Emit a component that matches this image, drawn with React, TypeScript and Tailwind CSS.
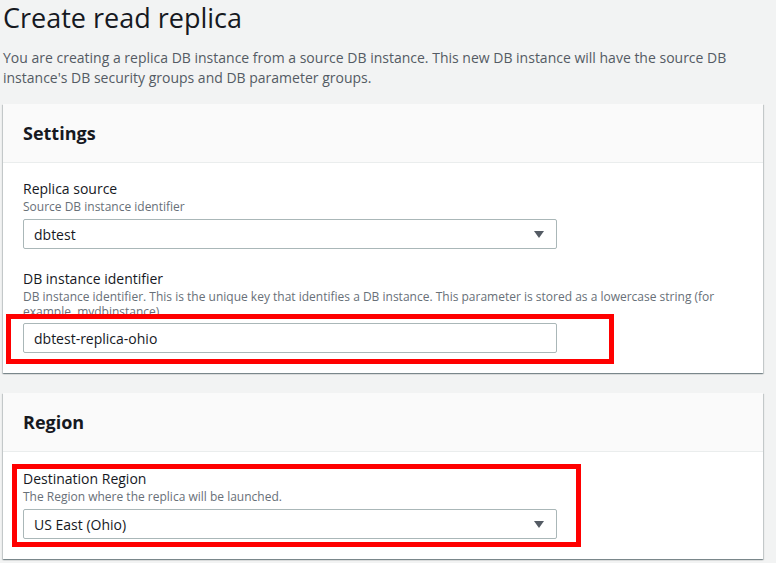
import React from "react";

const font = { fontFamily: '"Open Sans", "Noto Sans", sans-serif' };

function Caret() {
  return (
    <svg width="10" height="7" viewBox="0 0 10 7" className="shrink-0">
      <path d="M0 0 H10 L5 7 Z" fill="#545b64" />
    </svg>
  );
}

function Field({
  label,
  description,
  gap = "mt-[5px]",
  children,
}: {
  label: string;
  description: string;
  gap?: string;
  children: React.ReactNode;
}) {
  return (
    <div className="flex flex-col">
      <div className="text-[14px] leading-[20px] text-[#16191f]">{label}</div>
      <div className="text-[12px] leading-[15px] text-[#687078]">{description}</div>
      <div className={gap}>{children}</div>
    </div>
  );
}

function SelectBox({ value }: { value: string }) {
  return (
    <div className="flex h-[30px] w-[534px] items-center justify-between rounded-[2px] border border-[#aab7b8] bg-white pl-[10px] pr-[12px] text-[14px] text-[#16191f]">
      <span>{value}</span>
      <Caret />
    </div>
  );
}

function InputBox({ value }: { value: string }) {
  return (
    <div className="flex h-[30px] w-[534px] items-center rounded-[2px] border border-[#aab7b8] bg-white pl-[10px] text-[14px] text-[#16191f]">
      {value}
    </div>
  );
}

function Panel({ title, children }: { title: string; children: React.ReactNode }) {
  return (
    <section className="w-[760px] bg-white shadow-[0_1px_1px_0_rgba(0,28,36,0.3),1px_1px_1px_0_rgba(0,28,36,0.15),-1px_1px_1px_0_rgba(0,28,36,0.15)]">
      <div className="flex h-[59px] items-center border-b border-[#eaeded] bg-[#fafafa] px-[20px]">
        <h2 className="text-[18px] font-bold leading-[24px] text-[#16191f]">{title}</h2>
      </div>
      <div className="px-[20px] pb-[20px] pt-[16px]">{children}</div>
    </section>
  );
}

export default function App() {
  return (
    <div className="min-h-[563px] bg-[#f2f3f3] pl-[3px]" style={font}>
      <h1 className="text-[27px] font-normal leading-[36px] text-[#16191f]">Create read replica</h1>
      <p className="mt-[12px] w-[760px] text-[14px] leading-[20px] text-[#545b64]">
        You are creating a replica DB instance from a source DB instance. This new DB instance will have the
        source DB instance's DB security groups and DB parameter groups.
      </p>

      <div className="mt-[16px] flex flex-col gap-[20px]">
        <Panel title="Settings">
          <Field label="Replica source" description="Source DB instance identifier">
            <SelectBox value="dbtest" />
          </Field>
          <div className="mt-[20px]">
            <Field
              label="DB instance identifier"
              description="DB instance identifier. This is the unique key that identifies a DB instance. This parameter is stored as a lowercase string (for example, mydbinstance)."
              gap="mt-[4px]"
            >
              <div className="relative w-[534px]">
                <InputBox value="dbtest-replica-ohio" />
                <div className="pointer-events-none absolute -bottom-[11px] -left-[17px] -right-[57px] -top-[9px] border-[5px] border-[#ff0000]" />
              </div>
            </Field>
          </div>
        </Panel>

        <Panel title="Region">
          <div className="relative mt-[1px] w-[534px]">
            <Field label="Destination Region" description="The Region where the replica will be launched.">
              <SelectBox value="US East (Ohio)" />
            </Field>
            <div className="pointer-events-none absolute -bottom-[8px] -left-[11px] -right-[24px] -top-[5px] border-[5px] border-[#ff0000]" />
          </div>
        </Panel>
      </div>
    </div>
  );
}
